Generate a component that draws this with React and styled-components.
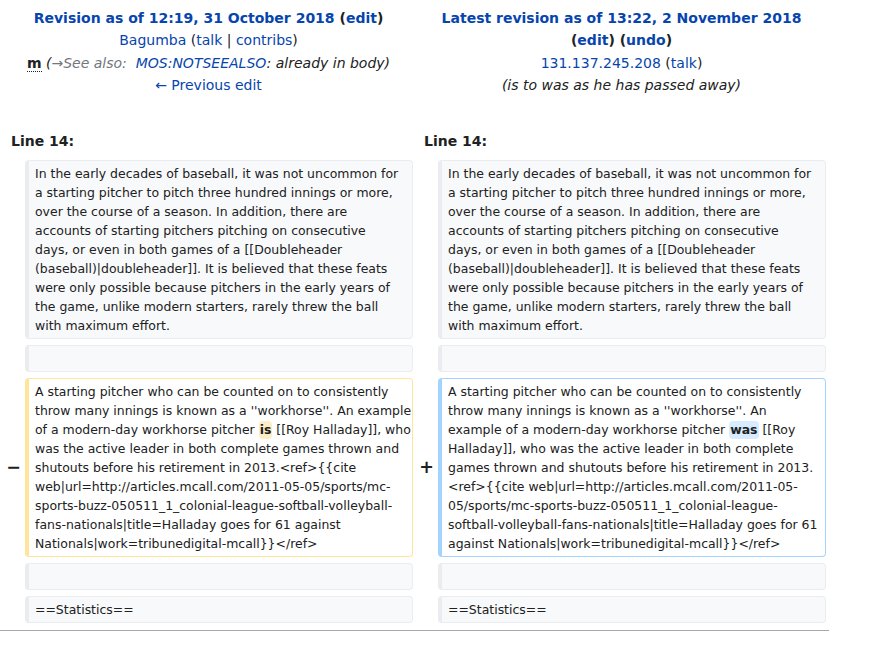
import React from 'react'
import styled, { createGlobalStyle } from 'styled-components'

const GlobalStyle = createGlobalStyle`
    body {
        margin: 0;
        background: #ffffff;
        font-family: "DejaVu Sans", sans-serif;
        font-size: 14px;
        line-height: 1.6;
        color: #202122;
    }
`

/**
 * Diff data (wrapped the way the source view wraps it, **word** = changed word)
 */
const contextPara = [
    'In the early decades of baseball, it was not uncommon for',
    'a starting pitcher to pitch three hundred innings or more,',
    'over the course of a season. In addition, there are',
    'accounts of starting pitchers pitching on consecutive',
    'days, or even in both games of a [[Doubleheader',
    '(baseball)|doubleheader]]. It is believed that these feats',
    'were only possible because pitchers in the early years of',
    'the game, unlike modern starters, rarely threw the ball',
    'with maximum effort.',
]

const deletedPara = [
    'A starting pitcher who can be counted on to consistently',
    'throw many innings is known as a \'\'workhorse\'\'. An example',
    'of a modern-day workhorse pitcher **is** [[Roy Halladay]], who',
    'was the active leader in both complete games thrown and',
    'shutouts before his retirement in 2013.<ref>{{cite',
    'web|url=http://articles.mcall.com/2011-05-05/sports/mc-',
    'sports-buzz-050511_1_colonial-league-softball-volleyball-',
    'fans-nationals|title=Halladay goes for 61 against',
    'Nationals|work=tribunedigital-mcall}}</ref>',
]

const addedPara = [
    'A starting pitcher who can be counted on to consistently',
    'throw many innings is known as a \'\'workhorse\'\'. An',
    'example of a modern-day workhorse pitcher **was** [[Roy',
    'Halladay]], who was the active leader in both complete',
    'games thrown and shutouts before his retirement in 2013.',
    '<ref>{{cite web|url=http://articles.mcall.com/2011-05-',
    '05/sports/mc-sports-buzz-050511_1_colonial-league-',
    'softball-volleyball-fans-nationals|title=Halladay goes for 61',
    'against Nationals|work=tribunedigital-mcall}}</ref>',
]

const renderText = (lines, kind) =>
    lines
        .join('\n')
        .split(/(\*\*[^*]+\*\*)/)
        .map((part, i) =>
            part.startsWith('**') ? (
                <Change key={i} kind={kind}>{part.slice(2, -2)}</Change>
            ) : (
                part
            )
        )

const App = () => {
    return (
        <>
            <GlobalStyle />
            <Page>
                <DiffGrid>
                    <TitleCell>
                        <Bold>
                            <Link>Revision as of 12:19, 31 October 2018</Link> (<Link>edit</Link>)
                        </Bold>
                        <div>
                            <Link>Bagumba</Link> (<Link>talk</Link> | <Link>contribs</Link>)
                        </div>
                        <div>
                            <Minor title="This is a minor edit">m</Minor>{' '}
                            <Comment>
                                (<AutoComment>→See also:&nbsp;</AutoComment> <Link>MOS:NOTSEEALSO</Link>: already in body)
                            </Comment>
                        </div>
                        <div>
                            <Link>← Previous edit</Link>
                        </div>
                    </TitleCell>
                    <TitleCell>
                        <Bold>
                            <Link>Latest revision as of 13:22, 2 November 2018</Link>
                        </Bold>
                        <Bold>
                            (<Link>edit</Link>) (<Link>undo</Link>)
                        </Bold>
                        <div>
                            <Link>131.137.245.208</Link> (<Link>talk</Link>)
                        </div>
                        <div>
                            <Comment>(is to was as he has passed away)</Comment>
                        </div>
                    </TitleCell>

                    <LineNo>Line 14:</LineNo>
                    <LineNo>Line 14:</LineNo>

                    <Marker />
                    <Line>{renderText(contextPara)}</Line>
                    <Marker />
                    <Line>{renderText(contextPara)}</Line>

                    <Marker />
                    <Line />
                    <Marker />
                    <Line />

                    <Marker>−</Marker>
                    <Line kind="deleted">{renderText(deletedPara, 'deleted')}</Line>
                    <Marker>+</Marker>
                    <Line kind="added">{renderText(addedPara, 'added')}</Line>

                    <Marker />
                    <Line />
                    <Marker />
                    <Line />

                    <Marker />
                    <Line>==Statistics==</Line>
                    <Marker />
                    <Line>==Statistics==</Line>
                </DiffGrid>
                <Divider />
            </Page>
        </>
    )
}
export default App

/**
 * Styled components
 */
const Page = styled.div`
    width: 829px;
    padding-top: 3px;
`

const DiffGrid = styled.div`
    display: grid;
    grid-template-columns: 17px 388px 17px 388px;
    column-gap: 4px;
    row-gap: 6px;
    padding: 4px 4px 7px;
    align-items: center;
`

const TitleCell = styled.div`
    grid-column: span 2;
    align-self: start;
    text-align: center;
    padding-bottom: 27px;
`

const Bold = styled.div`
    font-weight: bold;
`

const Link = styled.a`
    color: #0645ad;
    text-decoration: none;
    cursor: pointer;
`

const Minor = styled.abbr`
    font-weight: bold;
    text-decoration: none;
    border-bottom: 1px dotted #202122;
    cursor: help;
`

const Comment = styled.span`
    font-style: italic;
`

const AutoComment = styled.span`
    color: #72777d;
`

const LineNo = styled.div`
    grid-column: span 2;
    font-weight: bold;
    padding: 0 7px;
    margin-bottom: 2px;
`

const Marker = styled.div`
    text-align: right;
    font-weight: bold;
    font-size: 1.25em;
    line-height: 1.2;
`

const borderColors = {
    context: '#eaecf0',
    deleted: '#ffe49c',
    added: '#a3d3ff',
}

const Line = styled.div`
    align-self: stretch;
    min-height: 19px;
    box-sizing: content-box;
    padding: 3px 6px;
    font-size: 12.46px;
    line-height: 19px;
    color: #202122;
    white-space: pre;
    overflow: visible;
    background: ${p => (p.kind ? '#ffffff' : '#f8f9fa')};
    border: 1px solid ${p => borderColors[p.kind || 'context']};
    border-left-width: 4px;
    border-radius: 4px;
`

const Change = styled.span`
    display: inline-block;
    font-weight: bold;
    line-height: 18px;
    padding: 0 1px;
    border-radius: 4px;
    background: ${p => (p.kind === 'added' ? '#d8ecff' : '#feeec8')};
`

const Divider = styled.div`
    height: 1px;
    background: #a2a9b1;
`
